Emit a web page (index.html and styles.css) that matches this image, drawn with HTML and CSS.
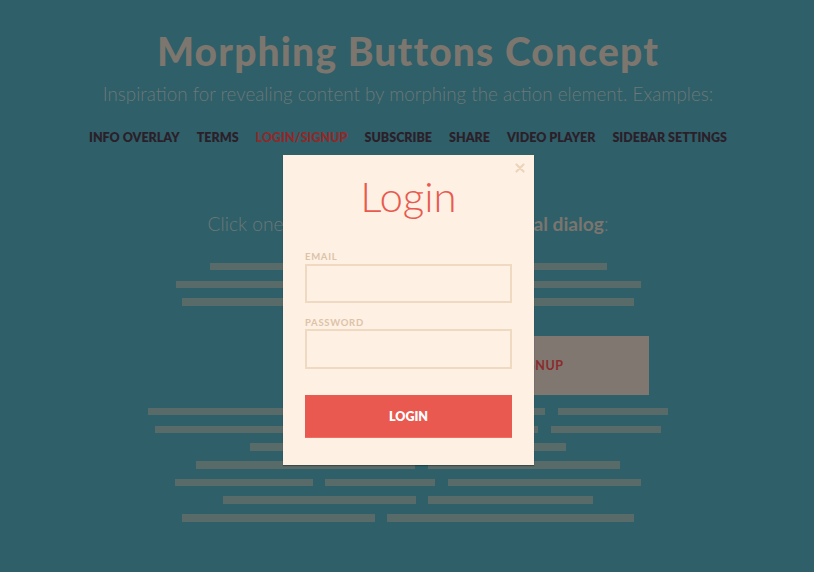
FILE: index.html
```html
<!DOCTYPE html>
<html lang="en">
<head>
<meta charset="utf-8">
<title>Morphing Buttons Concept</title>
<link rel="stylesheet" href="styles.css">
</head>
<body>
<div class="page">
  <header class="header">
    <h1 class="title">Morphing Buttons Concept</h1>
    <p class="subtitle">Inspiration for revealing content by morphing the action element. Examples:</p>
    <nav class="demos">
      <a class="demo-link" href="#">Info Overlay</a>
      <a class="demo-link" href="#">Terms</a>
      <a class="demo-link current" href="#">Login/Signup</a>
      <a class="demo-link" href="#">Subscribe</a>
      <a class="demo-link" href="#">Share</a>
      <a class="demo-link" href="#">Video Player</a>
      <a class="demo-link" href="#">Sidebar Settings</a>
    </nav>
  </header>
  <section class="content">
    <p class="intro">Click one of the buttons to open a <strong>modal dialog</strong>:</p>
    <div class="lines lines-top">
      <div class="row"><span class="bar" style="width:397px"></span></div>
      <div class="row"><span class="bar" style="width:465px"></span></div>
      <div class="row"><span class="bar" style="width:452px"></span></div>
    </div>
    <div class="btn-row">
      <button class="morph-btn" type="button">Login / Signup</button>
    </div>
    <div class="lines">
      <div class="row"><span class="bar" style="width:397.3px"></span><span class="bar" style="width:110.3px"></span></div>
      <div class="row"><span class="bar" style="width:383.2px"></span><span class="bar" style="width:110.5px"></span></div>
      <div class="row"><span class="bar" style="width:315.4px"></span></div>
      <div class="row"><span class="bar" style="width:219.7px"></span><span class="bar" style="width:192.5px"></span></div>
      <div class="row"><span class="bar" style="width:137.4px"></span><span class="bar" style="width:110.2px"></span><span class="bar" style="width:192.9px"></span></div>
      <div class="row"><span class="bar" style="width:192.5px"></span><span class="bar" style="width:164.9px"></span></div>
      <div class="row"><span class="bar" style="width:192.5px"></span><span class="bar" style="width:246.9px"></span></div>
    </div>
  </section>
</div>

<div class="modal" role="dialog" aria-label="Login">
  <button class="modal-close" type="button" aria-label="Close">
    <svg width="10" height="10" viewBox="0 0 10 10"><path d="M1.5 1.5 L8.5 8.5 M8.5 1.5 L1.5 8.5" stroke="#ecd4bd" stroke-width="2.2" stroke-linecap="round"/></svg>
  </button>
  <h2 class="modal-title">Login</h2>
  <form class="form">
    <label class="field-label" for="email">Email</label>
    <input class="field" id="email" type="text">
    <label class="field-label label-gap" for="password">Password</label>
    <input class="field" id="password" type="password">
    <button class="submit" type="button">Login</button>
  </form>
</div>
</body>
</html>
```

FILE: styles.css
```css
* { box-sizing: border-box; }

body {
  margin: 0;
  background: #2f5f69;
  font-family: Lato, "Open Sans", sans-serif;
}

.page {
  padding-left: 2px;
}

.header {
  text-align: center;
  padding-top: 28px;
}

.title {
  margin: 0;
  font-size: 39px;
  line-height: 46px;
  font-weight: 900;
  letter-spacing: 1.15px;
  color: #7c766e;
}

.subtitle {
  margin: 8px 0 0;
  font-size: 18.8px;
  line-height: 24px;
  font-weight: 300;
  color: #6b7877;
}

.demos {
  display: flex;
  justify-content: center;
  gap: 17px;
  margin-top: 24px;
}

.demo-link {
  font-size: 12.5px;
  line-height: 16px;
  font-weight: 800;
  text-transform: uppercase;
  text-decoration: none;
  color: #2b1f2a;
}

.demo-link.current {
  color: #8d2b2c;
}

.content {
  text-align: center;
}

.intro {
  margin: 66px 0 0;
  font-size: 19.2px;
  line-height: 24px;
  font-weight: 300;
  color: #6b7877;
}

.intro strong {
  font-weight: 700;
  color: #7a756e;
}

.lines {
  display: flex;
  flex-direction: column;
  gap: 10.3px;
  margin-top: 13px;
}

.lines-top {
  margin-top: 27px;
}

.row {
  display: flex;
  justify-content: center;
  gap: 12.4px;
}

.bar {
  display: block;
  height: 7.4px;
  background: #596b69;
}

.btn-row {
  display: flex;
  justify-content: flex-end;
  padding-right: 165px;
  margin-top: 30.7px;
}

.morph-btn {
  width: 275px;
  height: 58.6px;
  border: 0;
  background: #7f7770;
  color: #8b2b2d;
  font-family: inherit;
  font-size: 12.5px;
  font-weight: 700;
  text-transform: uppercase;
  letter-spacing: 0.5px;
}

/* modal overlay */
.modal {
  position: absolute;
  left: 283px;
  top: 155px;
  width: 251px;
  height: 310px;
  padding: 15px 22px 0;
  background: #fef0e3;
  box-shadow: 0 1px 1px rgba(0, 0, 0, 0.3);
}

.modal-close {
  position: absolute;
  right: 9px;
  top: 8px;
  width: 10px;
  height: 10px;
  padding: 0;
  border: 0;
  background: none;
  display: flex;
}

.modal-title {
  margin: 0;
  text-align: center;
  font-size: 42px;
  line-height: 52px;
  font-weight: 300;
  color: #e85a4f;
}

.form {
  display: flex;
  flex-direction: column;
  margin-top: 29.4px;
}

.field-label {
  font-size: 9.5px;
  line-height: 11px;
  font-weight: 700;
  letter-spacing: 0.7px;
  text-transform: uppercase;
  color: #dcc3a9;
  margin-bottom: 1.3px;
}

.label-gap {
  margin-top: 14px;
}

.field {
  height: 39.3px;
  border: 2px solid #f0d9c1;
  background: #fef0e3;
  outline: none;
}

.submit {
  margin-top: 26.5px;
  height: 43.3px;
  border: 0;
  border-bottom: 1px solid #ef6d64;
  background: #e95950;
  color: #fff;
  font-family: inherit;
  font-size: 12.5px;
  font-weight: 800;
  text-transform: uppercase;
}
```
